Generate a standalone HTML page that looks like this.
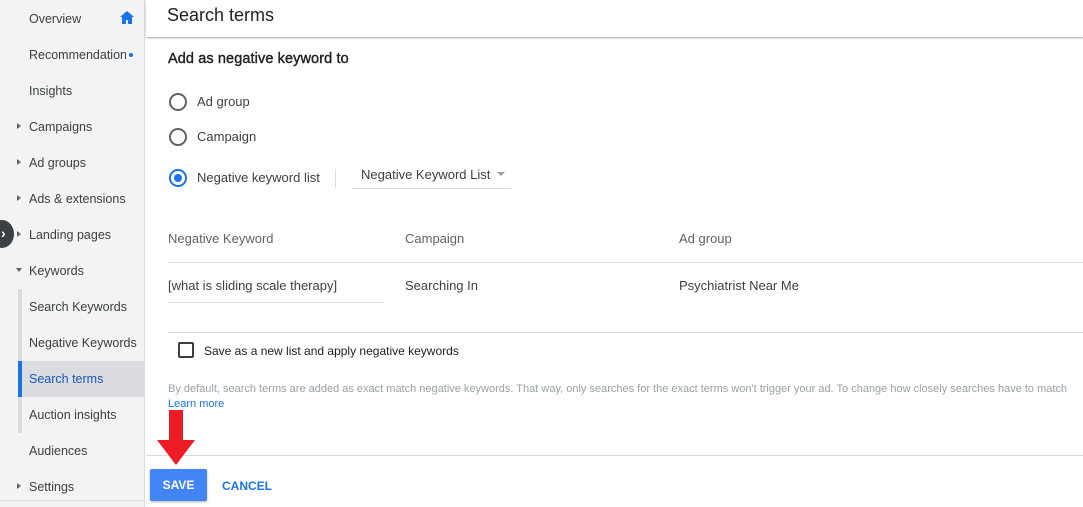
<!DOCTYPE html>
<html><head><style>
*{margin:0;padding:0;box-sizing:border-box}
body{width:1083px;height:507px;overflow:hidden;font-family:"Liberation Sans",Arial,sans-serif;background:#fff;position:relative;color:#3c4043}
.a{position:absolute;white-space:nowrap}
#side{position:absolute;left:0;top:0;width:145px;height:507px;background:#f1f3f4;border-right:1px solid #dadce0}
.n{position:absolute;left:29px;font-size:12.5px;color:#3c4043}
.tri{position:absolute;left:17px;width:0;height:0;border-top:3px solid transparent;border-bottom:3px solid transparent;border-left:4px solid #5f6368}
.radio{position:absolute;left:169px;width:18px;height:18px;border:2px solid #5f6368;border-radius:50%}
.t{font-size:13px;color:#3c4043}
</style></head><body>
<div id="side">
<div class="n" style="top:12px">Overview</div>
<svg class="a" style="left:120px;top:11px" width="14" height="13" viewBox="0 0 14 13"><path d="M7 0L0 6h2v7h4V9h2v4h4V6h2z" fill="#1a73e8"/></svg>
<div class="n" style="top:48px;width:97px;overflow:hidden">Recommendations</div>
<div class="a" style="left:129px;top:53px;width:4px;height:4px;border-radius:50%;background:#1a73e8"></div>
<div class="n" style="top:84px">Insights</div>
<div class="tri" style="top:123px"></div><div class="n" style="top:120px">Campaigns</div>
<div class="tri" style="top:159px"></div><div class="n" style="top:156px">Ad groups</div>
<div class="tri" style="top:195px"></div><div class="n" style="top:192px">Ads &amp; extensions</div>
<div class="tri" style="top:231px"></div><div class="n" style="top:228px">Landing pages</div>
<div class="a" style="left:16px;top:268px;border-left:3px solid transparent;border-right:3px solid transparent;border-top:4px solid #5f6368"></div>
<div class="n" style="top:264px">Keywords</div>
<div class="a" style="left:18px;top:289px;width:4px;height:144px;background:#dadce0"></div>
<div class="a" style="left:18px;top:361px;width:127px;height:36px;background:#dadce0"></div>
<div class="a" style="left:18px;top:361px;width:4px;height:36px;background:#1a73e8"></div>
<div class="n" style="top:300px">Search Keywords</div>
<div class="n" style="top:336px">Negative Keywords</div>
<div class="n" style="top:372px;color:#1a57b8">Search terms</div>
<div class="n" style="top:408px">Auction insights</div>
<div class="n" style="top:444px">Audiences</div>
<div class="tri" style="top:483px"></div><div class="n" style="top:480px">Settings</div>
<div class="a" style="left:0;top:500px;width:145px;height:1px;background:#dadce0"></div>
</div>
<div class="a" style="left:-10px;top:220px;width:24px;height:28px;border-radius:50%;background:#3c4043"></div>
<div class="a" style="left:1px;top:225px;color:#fff;font-size:14px;font-weight:bold">›</div>
<div class="a" style="left:146px;top:0;width:937px;height:37px;background:#fff;box-shadow:0 1px 2px rgba(0,0,0,.35)"></div>
<div class="a" style="left:167px;top:5px;font-size:18px;color:#202124">Search terms</div>
<div class="a" style="left:168px;top:51px;font-size:14.5px;color:#202124;font-weight:normal;-webkit-text-stroke:0.4px #202124;letter-spacing:.1px">Add as negative keyword to</div>
<div class="radio" style="top:93px"></div><div class="a t" style="left:197px;top:94px">Ad group</div>
<div class="radio" style="top:128px"></div><div class="a t" style="left:197px;top:129px">Campaign</div>
<div class="radio" style="top:169px;border-color:#1a73e8"></div><div class="a" style="left:174px;top:174px;width:8px;height:8px;border-radius:50%;background:#1a73e8"></div>
<div class="a t" style="left:197px;top:170px">Negative keyword list</div>
<div class="a" style="left:335px;top:169px;width:1px;height:19px;background:#dadce0"></div>
<div class="a t" style="left:361px;top:167px">Negative Keyword List</div>
<div class="a" style="left:497px;top:172px;border-left:4px solid transparent;border-right:4px solid transparent;border-top:4px solid #9e9e9e"></div>
<div class="a" style="left:352px;top:188px;width:159px;height:1px;background:#dadce0"></div>
<div class="a t" style="left:168px;top:231px;color:#5f6368">Negative Keyword</div>
<div class="a t" style="left:405px;top:231px;color:#5f6368">Campaign</div>
<div class="a t" style="left:679px;top:231px;color:#5f6368">Ad group</div>
<div class="a" style="left:168px;top:262px;width:915px;height:1px;background:#dadce0"></div>
<div class="a t" style="left:168px;top:278px">[what is sliding scale therapy]</div>
<div class="a" style="left:168px;top:302px;width:216px;height:1px;background:#dadce0"></div>
<div class="a t" style="left:405px;top:278px">Searching In</div>
<div class="a t" style="left:679px;top:278px">Psychiatrist Near Me</div>
<div class="a" style="left:168px;top:332px;width:915px;height:1px;background:#dadce0"></div>
<div class="a" style="left:178px;top:342px;width:16px;height:16px;border:2px solid #3c4043;border-radius:2px"></div>
<div class="a" style="left:204px;top:344px;font-size:12px;color:#202124">Save as a new list and apply negative keywords</div>
<div class="a" style="left:168px;top:383px;font-size:11px;color:#9aa0a6">By default, search terms are added as exact match negative keywords. That way, only searches for the exact terms won't trigger your ad. To change how closely searches have to match</div>
<div class="a" style="left:168px;top:398px;font-size:11px;color:#1a73e8">Learn more</div>
<div class="a" style="left:146px;top:455px;width:937px;height:1px;background:#dadce0"></div>
<svg class="a" style="left:156px;top:410px" width="40" height="56" viewBox="0 0 40 56"><path d="M13 0h14v30h12L20 55 1 30h12z" fill="#ed1c24"/></svg>
<div class="a" style="left:150px;top:469px;width:57px;height:32px;background:#4285f4;border-radius:2px;box-shadow:0 1px 2px rgba(0,0,0,.3);color:#fff;font-size:12px;font-weight:bold;text-align:center;line-height:32px">SAVE</div>
<div class="a" style="left:222px;top:479px;font-size:12px;color:#1a73e8;font-weight:bold">CANCEL</div>
</body></html>
